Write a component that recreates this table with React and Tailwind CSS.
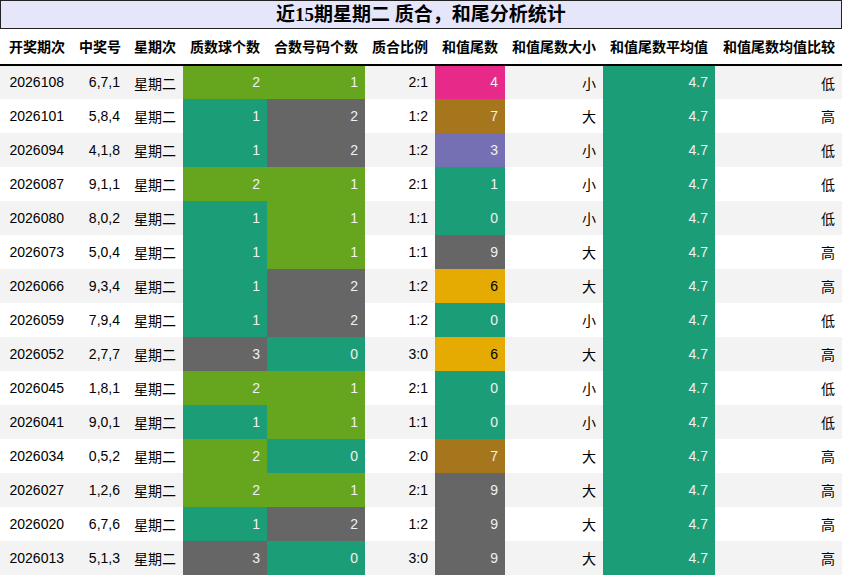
import React from "react";

const rows = [
  ["2026108", "6,7,1", 2, 1, "2:1", 4, "小", "低"],
  ["2026101", "5,8,4", 1, 2, "1:2", 7, "大", "高"],
  ["2026094", "4,1,8", 1, 2, "1:2", 3, "小", "低"],
  ["2026087", "9,1,1", 2, 1, "2:1", 1, "小", "低"],
  ["2026080", "8,0,2", 1, 1, "1:1", 0, "小", "低"],
  ["2026073", "5,0,4", 1, 1, "1:1", 9, "大", "高"],
  ["2026066", "9,3,4", 1, 2, "1:2", 6, "大", "高"],
  ["2026059", "7,9,4", 1, 2, "1:2", 0, "小", "低"],
  ["2026052", "2,7,7", 3, 0, "3:0", 6, "大", "高"],
  ["2026045", "1,8,1", 2, 1, "2:1", 0, "小", "低"],
  ["2026041", "9,0,1", 1, 1, "1:1", 0, "小", "低"],
  ["2026034", "0,5,2", 2, 0, "2:0", 7, "大", "高"],
  ["2026027", "1,2,6", 2, 1, "2:1", 9, "大", "高"],
  ["2026020", "6,7,6", 1, 2, "1:2", 9, "大", "高"],
  ["2026013", "5,1,3", 3, 0, "3:0", 9, "大", "高"],
];

const headers = [
  "开奖期次",
  "中奖号",
  "星期次",
  "质数球个数",
  "合数号码个数",
  "质合比例",
  "和值尾数",
  "和值尾数大小",
  "和值尾数平均值",
  "和值尾数均值比较",
];

const widths = ["w-[72px]", "w-[55px]", "w-[56px]", "w-[84px]", "w-[98px]", "w-[70px]", "w-[70px]", "w-[98px]", "w-[112px]", "w-[127px]"];

const primeColor = { 1: "bg-[#1b9e77] text-[#f1f1f1]", 2: "bg-[#66a61e] text-[#f1f1f1]", 3: "bg-[#666666] text-[#f1f1f1]" };
const compColor = { 0: "bg-[#1b9e77] text-[#f1f1f1]", 1: "bg-[#66a61e] text-[#f1f1f1]", 2: "bg-[#666666] text-[#f1f1f1]" };
const tailColor = {
  0: "bg-[#1b9e77] text-[#f1f1f1]",
  1: "bg-[#1b9e77] text-[#f1f1f1]",
  3: "bg-[#7570b3] text-[#f1f1f1]",
  4: "bg-[#e7298a] text-[#f1f1f1]",
  6: "bg-[#e6ab02] text-black",
  7: "bg-[#a6761d] text-[#f1f1f1]",
  9: "bg-[#666666] text-[#f1f1f1]",
};

const font = "font-['Liberation_Sans','Noto_Sans_CJK_SC',sans-serif]";

export default function App() {
  return (
    <div className={`w-[842px] bg-white text-black ${font}`}>
      <div className="flex h-[29px] items-center justify-center border border-[#222] bg-[#e6e6fa] font-['Liberation_Serif','Noto_Sans_CJK_SC',serif] text-[19px] font-bold leading-none">
        近15期星期二 质合，和尾分析统计
      </div>
      <table className="w-[842px] table-fixed border-collapse text-[14px]">
        <colgroup>
          {widths.map((w, i) => (
            <col key={i} className={w} />
          ))}
        </colgroup>
        <thead>
          <tr className="h-[36px] border-b-2 border-black">
            {headers.map((h) => (
              <th key={h} className="whitespace-nowrap px-[7px] pt-[2px] text-right font-bold">
                {h}
              </th>
            ))}
          </tr>
        </thead>
        <tbody>
          {rows.map((r, i) => (
            <tr key={r[0]} className={`h-[34px] ${i % 2 === 0 ? "bg-[#f3f3f3]" : "bg-white"}`}>
              <td className="px-[8px] text-right">{r[0]}</td>
              <td className="px-[7px] text-right">{r[1]}</td>
              <td className="px-[7px] pt-[3px] text-right">星期二</td>
              <td className={`px-[7px] text-right ${primeColor[r[2]]}`}>{r[2]}</td>
              <td className={`px-[7px] text-right ${compColor[r[3]]}`}>{r[3]}</td>
              <td className="px-[7px] text-right">{r[4]}</td>
              <td className={`px-[7px] text-right ${tailColor[r[5]]}`}>{r[5]}</td>
              <td className="px-[7px] pt-[3px] text-right">{r[6]}</td>
              <td className="bg-[#1b9e77] px-[7px] text-right text-[#f1f1f1]">4.7</td>
              <td className="px-[7px] pt-[3px] text-right">{r[7]}</td>
            </tr>
          ))}
        </tbody>
      </table>
    </div>
  );
}
